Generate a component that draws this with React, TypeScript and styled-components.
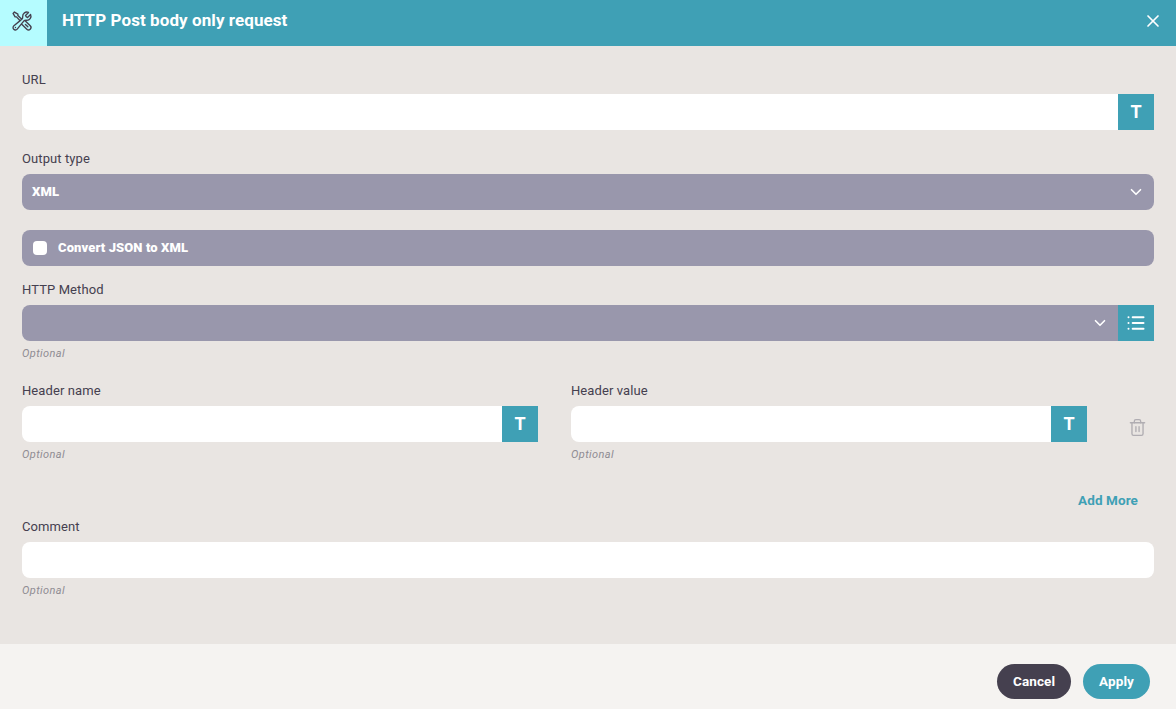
import styled, { createGlobalStyle } from 'styled-components'
import { ChevronDown, List, Trash2, X } from 'lucide-react'
import { HiOutlineWrenchScrewdriver } from 'react-icons/hi2'

const teal = '#3fa0b5'
const slate = '#9997ac'
const ink = '#45404f'

const GlobalStyle = createGlobalStyle`
  html, body {
    margin: 0;
    padding: 0;
    height: 100%;
    overflow: hidden;
  }
  body {
    font-family: Roboto, 'Liberation Sans', sans-serif;
    color: ${ink};
  }
  #root {
    height: 100%;
  }
`

const Dialog = styled.div`
  display: flex;
  flex-direction: column;
  width: 1176px;
  height: 709px;
  background: #e9e5e2;
`

const Header = styled.header`
  display: flex;
  align-items: center;
  height: 46px;
  flex-shrink: 0;
  background: ${teal};
  color: #fff;
`

const HeaderIcon = styled.div`
  display: flex;
  align-items: center;
  justify-content: center;
  box-sizing: border-box;
  width: 47px;
  height: 100%;
  padding: 0 3px 4px 0;
  background: #b5fcff;
  color: ${ink};
`

const Title = styled.h1`
  flex: 1;
  margin: 0 0 7px 15px;
  font-size: 17px;
  line-height: 20px;
  font-weight: 700;
  letter-spacing: 0.08px;
`

const CloseButton = styled.button`
  display: flex;
  padding: 0;
  margin: 0 13px 4px 0;
  border: 0;
  background: none;
  color: #fff;
`

const Form = styled.main`
  flex: 1;
  display: flex;
  flex-direction: column;
  padding: 26px 22px 0;
`

const Field = styled.div<{ $top?: number }>`
  display: flex;
  flex-direction: column;
  margin-top: ${({ $top }) => $top ?? 0}px;
`

const Label = styled.label<{ $gap?: number }>`
  height: 16px;
  margin-bottom: ${({ $gap }) => $gap ?? 7}px;
  font-size: 13px;
  line-height: 16px;
  letter-spacing: 0.1px;
`

const Control = styled.div`
  display: flex;
  height: 36px;
`

const Input = styled.div<{ $attached?: boolean }>`
  flex: 1;
  background: #fff;
  border-radius: ${({ $attached }) => ($attached ? '8px 0 0 8px' : '8px')};
`

const Select = styled.div<{ $attached?: boolean }>`
  flex: 1;
  display: flex;
  align-items: center;
  justify-content: space-between;
  padding: 0 9px 0 10px;
  background: ${slate};
  color: #fff;
  border-radius: ${({ $attached }) => ($attached ? '8px 0 0 8px' : '8px')};
`

const SelectValue = styled.span`
  margin-bottom: 2px;
  font-size: 13px;
  font-weight: 900;
  letter-spacing: 0.1px;
`

const AddonButton = styled.button`
  display: flex;
  align-items: center;
  justify-content: center;
  width: 36px;
  height: 36px;
  padding: 0;
  border: 0;
  background: ${teal};
  color: #fff;
`

const TextAddon = styled(AddonButton)`
  padding-bottom: 2px;
  font-family: inherit;
  font-size: 18px;
  font-weight: 700;
`

const CheckboxRow = styled.div`
  display: flex;
  align-items: center;
  gap: 11px;
  height: 36px;
  margin-top: 20px;
  padding: 0 11px;
  background: ${slate};
  border-radius: 8px;
  color: #fff;
`

const CheckBox = styled.span`
  width: 14px;
  height: 14px;
  background: #fff;
  border-radius: 4px;
`

const Hint = styled.div`
  height: 14px;
  margin-top: 6px;
  font-size: 11px;
  line-height: 14px;
  font-style: italic;
  letter-spacing: 0.4px;
  color: #8f8c93;
`

const HeaderRow = styled.div`
  display: grid;
  grid-template-columns: 516px 516px 1fr;
  column-gap: 33px;
  margin-top: 22px;
`

const TrashCell = styled.div`
  display: flex;
  align-items: flex-start;
  padding: 35px 0 0 8px;
  color: #b0adb2;
`

const AddMoreRow = styled.div`
  display: flex;
  justify-content: flex-end;
  margin-top: 30px;
  padding-right: 16px;
`

const AddMore = styled.button`
  padding: 0;
  border: 0;
  background: none;
  color: ${teal};
  font-family: inherit;
  font-size: 13.5px;
  line-height: 16px;
  font-weight: 700;
  letter-spacing: 0.1px;
`

const Footer = styled.footer`
  display: flex;
  align-items: flex-start;
  justify-content: flex-end;
  gap: 12px;
  height: 65px;
  flex-shrink: 0;
  padding: 20px 26px 0 0;
  box-sizing: border-box;
  background: #f5f3f1;
`

const PillButton = styled.button<{ $primary?: boolean }>`
  height: 35px;
  padding: 0 16px 2px;
  border: 0;
  border-radius: 18px;
  background: ${({ $primary }) => ($primary ? teal : ink)};
  color: #fff;
  font-family: inherit;
  font-size: 13.5px;
  font-weight: 700;
  letter-spacing: 0.1px;
`

export default function App() {
  return (
    <Dialog>
      <GlobalStyle />
      <Header>
        <HeaderIcon>
          <HiOutlineWrenchScrewdriver size={22} />
        </HeaderIcon>
        <Title>HTTP Post body only request</Title>
        <CloseButton aria-label='Close'>
          <X size={20} strokeWidth={2} />
        </CloseButton>
      </Header>

      <Form>
        <Field>
          <Label $gap={6}>URL</Label>
          <Control>
            <Input $attached />
            <TextAddon>T</TextAddon>
          </Control>
        </Field>

        <Field $top={21}>
          <Label>Output type</Label>
          <Control>
            <Select>
              <SelectValue>XML</SelectValue>
              <ChevronDown size={18} strokeWidth={2.2} />
            </Select>
          </Control>
        </Field>

        <CheckboxRow>
          <CheckBox />
          <SelectValue>Convert JSON to XML</SelectValue>
        </CheckboxRow>

        <Field $top={16}>
          <Label>HTTP Method</Label>
          <Control>
            <Select $attached>
              <span />
              <ChevronDown size={18} strokeWidth={2.2} />
            </Select>
            <AddonButton>
              <List size={20} strokeWidth={2.4} />
            </AddonButton>
          </Control>
          <Hint>Optional</Hint>
        </Field>

        <HeaderRow>
          <Field>
            <Label>Header name</Label>
            <Control>
              <Input $attached />
              <TextAddon>T</TextAddon>
            </Control>
            <Hint>Optional</Hint>
          </Field>
          <Field>
            <Label>Header value</Label>
            <Control>
              <Input $attached />
              <TextAddon>T</TextAddon>
            </Control>
            <Hint>Optional</Hint>
          </Field>
          <TrashCell>
            <Trash2 size={19} strokeWidth={1.7} />
          </TrashCell>
        </HeaderRow>

        <AddMoreRow>
          <AddMore>Add More</AddMore>
        </AddMoreRow>

        <Field $top={11}>
          <Label>Comment</Label>
          <Control>
            <Input />
          </Control>
          <Hint>Optional</Hint>
        </Field>
      </Form>

      <Footer>
        <PillButton>Cancel</PillButton>
        <PillButton $primary>Apply</PillButton>
      </Footer>
    </Dialog>
  )
}
